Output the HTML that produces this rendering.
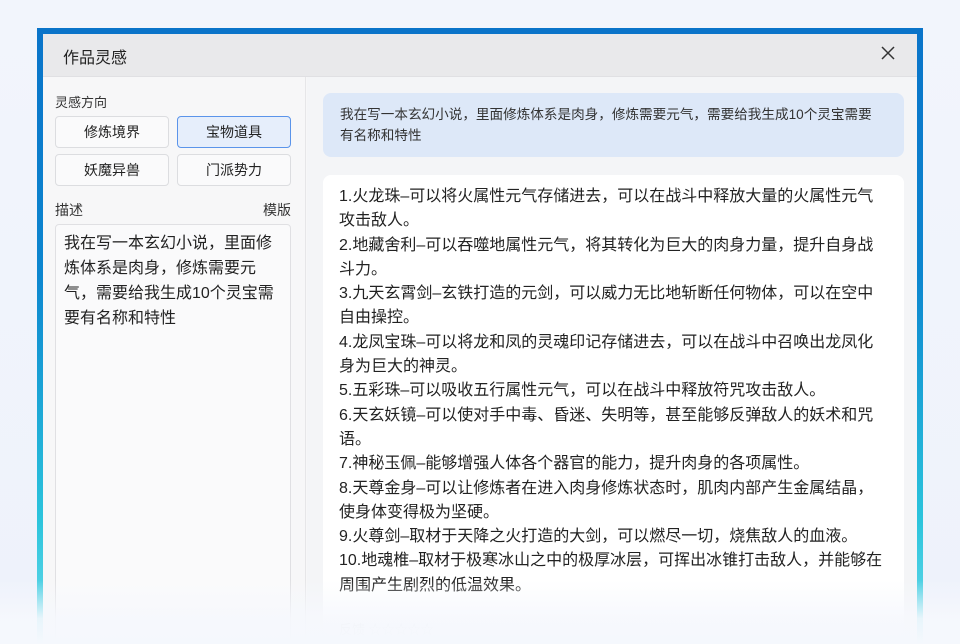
<!DOCTYPE html>
<html><head><meta charset="utf-8"><style>
*{margin:0;padding:0;box-sizing:border-box}
html,body{width:960px;height:644px;overflow:hidden}
body{background:linear-gradient(180deg,#f2f5fc,#eef2fb);font-family:"Liberation Sans","Noto Sans CJK SC",sans-serif;position:relative;color:#333}
.frame{position:absolute;left:37px;top:28px;width:886px;height:616px;background:linear-gradient(180deg,#0a74c9 0%,#0c86cf 40%,#2cc4dc 80%,#6fdceb 100%)}
.win{position:absolute;left:43px;top:34px;width:874px;height:610px;background:#f7f7f8;overflow:hidden}
.hdr{height:43px;background:#e9e9eb;border-bottom:1px solid #e0e0e3;font-size:16px;color:#222;padding:10px 0 0 20px}
.x{position:absolute;right:22px;top:12px}
.left{position:absolute;left:0;top:43px;width:263px;bottom:0;border-right:1px solid #e6e6e8}
.lbl{position:absolute;font-size:13px;color:#333}
.btn{position:absolute;width:114px;height:32px;border:1px solid #dcdde0;border-radius:4px;background:#fafafb;font-size:14px;text-align:center;line-height:30px;color:#222}
.btn.a{background:#e6eefb;border-color:#5b94ea}
.ta{position:absolute;left:12px;top:147px;width:236px;height:420px;border:1px solid #e0e0e3;border-radius:4px;background:#fafafb;padding:6px 8px;font-size:16px;line-height:25px;color:#222}
.right{position:absolute;left:264px;top:43px;right:0;bottom:0;background:#f4f5f7}
.q{position:absolute;left:16px;top:16px;width:581px;height:64px;background:#dde8f8;border-radius:8px;padding:11px 24px 11px 17px;font-size:13.6px;line-height:21px;color:#333}
.ans{position:absolute;left:16px;top:98px;width:581px;height:460px;background:#fff;border-radius:8px;padding:10px 16px 9px 16px;font-size:16px;line-height:24.3px;color:#222;overflow:hidden}
.fade{position:absolute;left:0;right:0;bottom:0;height:64px;background:linear-gradient(180deg,rgba(246,248,253,0),rgba(246,248,253,.9) 60%,#f5f8fd)}
</style></head><body>
<div class="frame"></div>
<div class="win">
<div class="hdr">作品灵感</div>
<svg class="x" width="14" height="14" viewBox="0 0 14 14"><path d="M1 1L13 13M13 1L1 13" stroke="#333" stroke-width="1.5"/></svg>
<div class="left">
<div class="lbl" style="left:12px;top:15px">灵感方向</div>
<div class="btn" style="left:12px;top:39px">修炼境界</div>
<div class="btn a" style="left:134px;top:39px">宝物道具</div>
<div class="btn" style="left:12px;top:77px">妖魔异兽</div>
<div class="btn" style="left:134px;top:77px">门派势力</div>
<div class="lbl" style="left:12px;top:123px;font-size:14px">描述</div>
<div class="lbl" style="left:220px;top:123px;font-size:14px">模版</div>
<div class="ta">我在写一本玄幻小说，里面修炼体系是肉身，修炼需要元气，需要给我生成10个灵宝需要有名称和特性</div>
</div>
<div class="right">
<div class="q">我在写一本玄幻小说，里面修炼体系是肉身，修炼需要元气，需要给我生成10个灵宝需要有名称和特性</div>
<div class="ans">1.火龙珠–可以将火属性元气存储进去，可以在战斗中释放大量的火属性元气攻击敌人。<br>2.地藏舍利–可以吞噬地属性元气，将其转化为巨大的肉身力量，提升自身战斗力。<br>3.九天玄霄剑–玄铁打造的元剑，可以威力无比地斩断任何物体，可以在空中自由操控。<br>4.龙凤宝珠–可以将龙和凤的灵魂印记存储进去，可以在战斗中召唤出龙凤化身为巨大的神灵。<br>5.五彩珠–可以吸收五行属性元气，可以在战斗中释放符咒攻击敌人。<br>6.天玄妖镜–可以使对手中毒、昏迷、失明等，甚至能够反弹敌人的妖术和咒语。<br>7.神秘玉佩–能够增强人体各个器官的能力，提升肉身的各项属性。<br>8.天尊金身–可以让修炼者在进入肉身修炼状态时，肌肉内部产生金属结晶，使身体变得极为坚硬。<br>9.火尊剑–取材于天降之火打造的大剑，可以燃尽一切，烧焦敌人的血液。<br>10.地魂椎–取材于极寒冰山之中的极厚冰层，可挥出冰锥打击敌人，并能够在周围产生剧烈的低温效果。
<div style="margin-top:20px;color:#ccc;font-size:13px">反馈 ☆☆☆☆☆</div></div>
</div>
</div>
<div class="fade"></div>
</body></html>
